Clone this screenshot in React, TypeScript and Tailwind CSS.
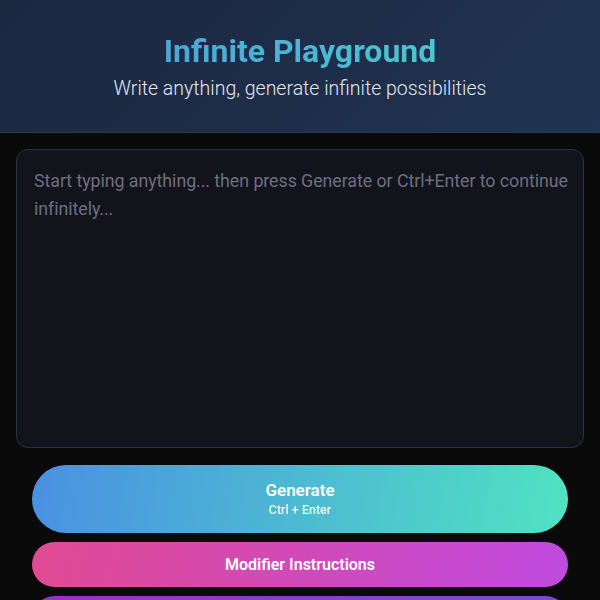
import React from "react";

export default function App() {
  return (
    <div className="min-h-screen bg-[#0a0a0a] font-['Roboto',sans-serif]">
      <header className="border-b border-[#2a3a55] bg-[linear-gradient(135deg,#1c2740_0%,#1e2d48_50%,#1f3553_100%)] px-4 pt-8 pb-[31px] text-center">
        <h1 className="bg-[linear-gradient(90deg,#4a97e0,#4fd4c8)] bg-clip-text text-[32px] font-bold leading-[38px] text-transparent">
          Infinite Playground
        </h1>
        <p className="mt-[7px] text-[19.5px] font-light leading-6 text-[#e2e8f0]">
          Write anything, generate infinite possibilities
        </p>
      </header>
      <main className="flex flex-col p-4">
        <textarea
          className="h-[299px] w-full resize-none overflow-hidden rounded-xl border border-[#263247] bg-[#12131b] pt-[17px] pb-4 pl-[17px] pr-[2px] text-[17.8px] tracking-[-0.05px] leading-7 text-[#e5e7eb] outline-none placeholder:text-[#6b7080]"
          placeholder="Start typing anything... then press Generate or Ctrl+Enter to continue infinitely..."
        />
        <div className="mt-[17px] flex flex-col gap-[9px] px-4">
          <button className="flex h-[68px] flex-col items-center justify-center rounded-full bg-[linear-gradient(100deg,#4a90e2,#50e3c2)] text-white">
            <span className="text-[17px] font-semibold leading-5">Generate</span>
            <span className="mt-[2px] text-[12.5px] font-medium leading-4 opacity-90">Ctrl + Enter</span>
          </button>
          <button className="h-[45px] rounded-full bg-[linear-gradient(100deg,#e24a92,#c04ae0)] text-[16px] font-semibold text-white">
            Modifier Instructions
          </button>
          <button className="h-[45px] rounded-full bg-[linear-gradient(100deg,#9b30c8,#7b4ad8)] text-[16px] font-semibold text-white">
            Settings
          </button>
        </div>
      </main>
    </div>
  );
}
